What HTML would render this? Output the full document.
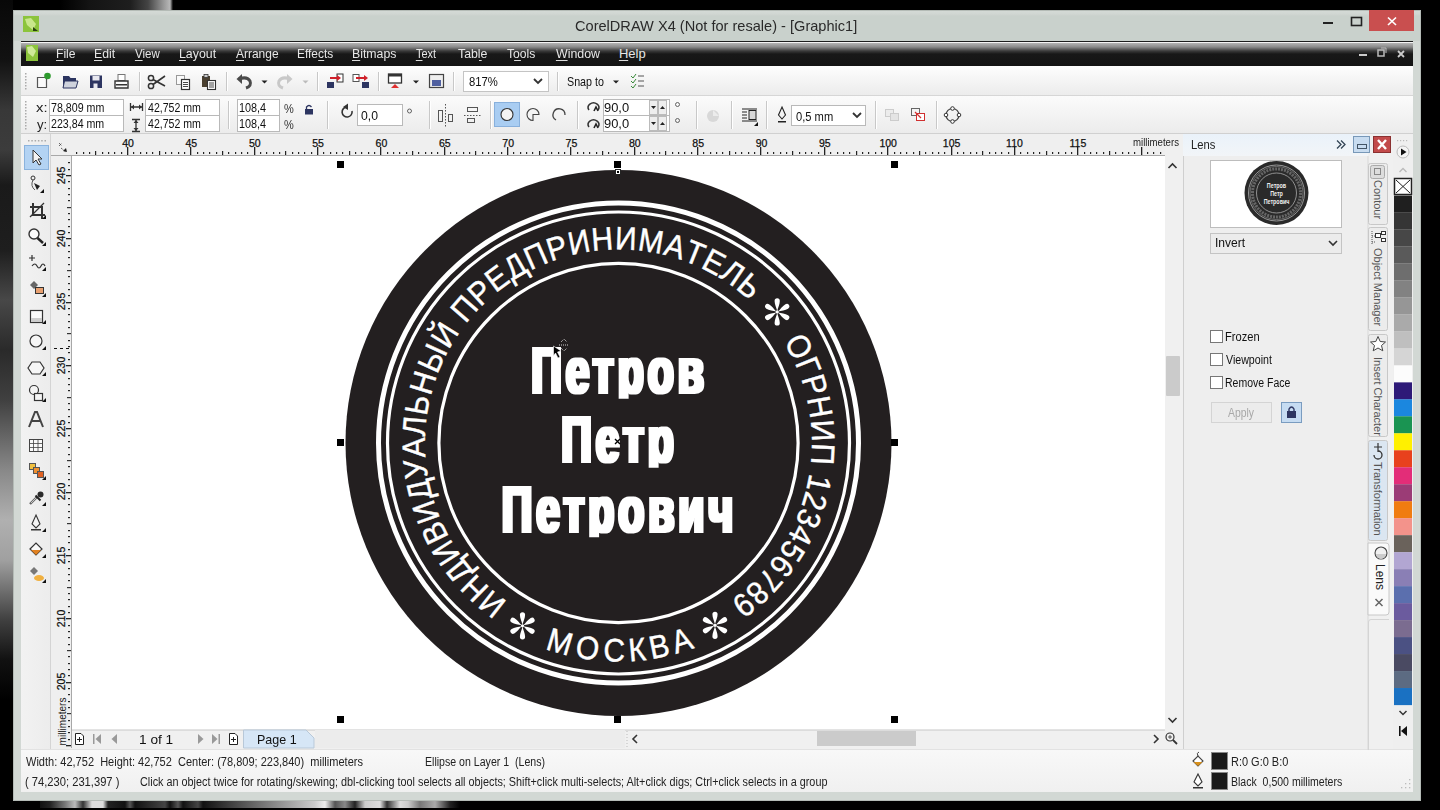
<!DOCTYPE html>
<html><head><meta charset="utf-8">
<style>
*{margin:0;padding:0;box-sizing:border-box}
html,body{width:1440px;height:810px;overflow:hidden;background:#000;font-family:"Liberation Sans",sans-serif;font-size:12px;color:#000}
.a{position:absolute}
.t{white-space:nowrap}
svg{position:absolute;left:0;top:0}
</style></head><body>
<div class="a" style="left:0px;top:0px;width:13px;height:810px;background:linear-gradient(180deg,#080808 0,#121212 60px,#383838 110px,#3c3c3c 150px,#1a1a1a 185px,#1e1e1e 250px,#484848 300px,#2a2a2a 350px,#404040 400px,#888 470px,#b0b0b0 520px,#a0a0a0 560px,#404040 620px,#111 660px,#000 700px)"></div>
<div class="a" style="left:40px;top:801px;width:420px;height:7px;background:linear-gradient(90deg,#111 0,#222 10px,#777 25px,#bbb 35px,#333 43px,#ddd 52px,#ddd 63px,#222 68px,#111 85px,#555 90px,#111 95px,#444 125px,#111 130px,#555 138px,#111 143px,#444 158px,#111 163px,#ccc 275px,#eee 285px,#555 295px,#888 305px,#222 315px,#ccc 325px,#ddd 340px,#333 347px,#ddd 360px,#ccc 368px,#777 380px,#aaa 395px,#222 410px,#000 420px)"></div>
<div class="a" style="left:60px;top:0px;width:113px;height:10px;background:linear-gradient(90deg,#000 0,#141414 30px,#1e1e1e 70px,#444 88px,#9a9a9a 104px,#b8b8b8 110px,#000 113px)"></div>
<div class="a" style="left:13px;top:10px;width:1408px;height:791px;background:#d2d8d4;border:1px solid #b4bbb6"></div>
<div class="a" style="left:14px;top:11px;width:1406px;height:30px;background:linear-gradient(180deg,#d4dad6 0,#d0d6d2 3px,#c9d1cc 5px,#c9d1cc 100%)"></div>
<div class="a" style="left:21px;top:41px;width:1392px;height:751px;background:#f0f0f0"></div>
<div class="a" style="left:21px;top:41px;width:1392px;height:25px;background:linear-gradient(180deg,#1e1e1e 0,#1e1e1e 1px,#f4f4f4 1px,#f4f4f4 2px,#b4b4b4 2px,#8a8a8a 6px,#3a3a3a 10px,#181818 13px,#141414 100%)"></div>
<div class="a" style="left:21px;top:66px;width:1392px;height:29px;background:linear-gradient(180deg,#fefefe 0,#f6f6f6 40%,#ececec 100%)"></div>
<div class="a" style="left:21px;top:95px;width:1392px;height:1px;background:#d6d6d6"></div>
<div class="a" style="left:21px;top:96px;width:1392px;height:38px;background:linear-gradient(180deg,#fbfbfb 0,#f3f3f3 50%,#ebebeb 100%)"></div>
<div class="a" style="left:21px;top:133px;width:1392px;height:1px;background:#d0d0d0"></div>
<div class="a" style="left:21px;top:134px;width:30px;height:616px;background:linear-gradient(90deg,#f2f2f2,#ececec)"></div>
<div class="a" style="left:50px;top:134px;width:1px;height:616px;background:#d4d4d4"></div>
<div class="a" style="left:51px;top:134px;width:1114px;height:22px;background:#efefef"></div>
<div class="a" style="left:51px;top:156px;width:21px;height:574px;background:#efefef"></div>
<div class="a" style="left:72px;top:156px;width:1093px;height:574px;background:#fff"></div>
<div class="a" style="left:1165px;top:156px;width:18px;height:574px;background:#f0f0f0"></div>
<div class="a" style="left:72px;top:730px;width:1111px;height:20px;background:#f0f0f0"></div>
<div class="a" style="left:51px;top:730px;width:21px;height:20px;background:#efefef"></div>
<div class="a" style="left:1183px;top:134px;width:185px;height:616px;background:#eeeeee"></div>
<div class="a" style="left:1183px;top:134px;width:1px;height:616px;background:#cfcfcf"></div>
<div class="a" style="left:1183px;top:134px;width:185px;height:22px;background:linear-gradient(180deg,#eaf2fa,#f2f5f8)"></div>
<div class="a" style="left:1368px;top:134px;width:25px;height:616px;background:#f0f0f0"></div>
<div class="a" style="left:1393px;top:134px;width:20px;height:616px;background:#efefef"></div>
<div class="a" style="left:21px;top:750px;width:1392px;height:42px;background:linear-gradient(180deg,#f8f8f8,#f0f0f0)"></div>
<div class="a" style="left:21px;top:749px;width:1392px;height:1px;background:#e2e2e2"></div>
<svg width="1440" height="810" viewBox="0 0 1440 810">
<rect x="23" y="16" width="16" height="16" fill="#8cc43c"/><path d="M25 19 L31 18 L36 24 L33 30 L27 25 Z" fill="#d8f0a0" opacity="0.8"/><path d="M33 27 L38 31 L33 31Z" fill="#2a4010"/>
<rect x="1323" y="22" width="10" height="2" fill="#222"/>
<rect x="1351.5" y="17.5" width="10" height="8" fill="none" stroke="#222" stroke-width="1.6"/>
<rect x="1369" y="10" width="45" height="21" fill="#c94f4f"/>
<path d="M1388 17.5 L1396 25 M1396 17.5 L1388 25" stroke="#fff" stroke-width="1.7"/>
<rect x="26" y="45" width="12" height="16" fill="#8cc43c"/><path d="M27 47 L32 46 L36 51 L33 57 L28 53Z" fill="#e0f4b0" opacity="0.8"/>
<rect x="56.0" y="60" width="7.4" height="1" fill="#ddd"/>
<rect x="94.0" y="60" width="8.2" height="1" fill="#ddd"/>
<rect x="134.9" y="60" width="7.7" height="1" fill="#ddd"/>
<rect x="179.0" y="60" width="6.9" height="1" fill="#ddd"/>
<rect x="236.0" y="60" width="8.0" height="1" fill="#ddd"/>
<rect x="318.2" y="60" width="6.0" height="1" fill="#ddd"/>
<rect x="352.0" y="60" width="8.2" height="1" fill="#ddd"/>
<rect x="415.8" y="60" width="6.7" height="1" fill="#ddd"/>
<rect x="479.0" y="60" width="2.7" height="1" fill="#ddd"/>
<rect x="514.1" y="60" width="6.8" height="1" fill="#ddd"/>
<rect x="555.9" y="60" width="11.7" height="1" fill="#ddd"/>
<rect x="618.9" y="60" width="9.3" height="1" fill="#ddd"/>
<rect x="1359" y="54" width="8" height="2" fill="#ccc"/>
<rect x="1378" y="50" width="6" height="6" fill="none" stroke="#bbb" stroke-width="1.5"/><path d="M1381 48 H1386 V53" fill="none" stroke="#bbb" stroke-width="1"/>
<path d="M1398 51 L1404 57 M1404 51 L1398 57" stroke="#ccc" stroke-width="1.8"/>
<rect x="25" y="73" width="1.5" height="1.5" fill="#aaa"/>
<rect x="25" y="76" width="1.5" height="1.5" fill="#aaa"/>
<rect x="25" y="79" width="1.5" height="1.5" fill="#aaa"/>
<rect x="25" y="82" width="1.5" height="1.5" fill="#aaa"/>
<rect x="25" y="85" width="1.5" height="1.5" fill="#aaa"/>
<rect x="25" y="88" width="1.5" height="1.5" fill="#aaa"/>
<path d="M37.5 77.5 H46.5 V87.5 H37.5 Z" fill="#fafafa" stroke="#555" stroke-width="1.2"/><circle cx="47.5" cy="76" r="3.3" fill="#2e9a2e"/>
<path d="M63 76 H69 L70.5 78 H76 V88 H63 Z" fill="#2c3560"/><path d="M64.5 81 H78 L76 88 H63 Z" fill="#cfd3dd" stroke="#2c3560" stroke-width="1"/>
<rect x="90" y="75.5" width="12" height="12.5" fill="#2d3561"/><rect x="92.5" y="76" width="7" height="4.5" fill="#e8e8f0"/><rect x="93.5" y="83.5" width="4" height="4.5" fill="#e8e8f0"/>
<rect x="118" y="74.5" width="7" height="6" fill="#fff" stroke="#777" stroke-width="1"/><path d="M115 81 H128 V88 H115 Z" fill="#fafafa" stroke="#333" stroke-width="1.4"/><rect x="116" y="84" width="11" height="1.5" fill="#333"/>
<rect x="139" y="72" width="1" height="19" fill="#c8c8c8"/><rect x="140" y="72" width="1" height="19" fill="#fff"/>
<circle cx="151" cy="78" r="2.6" fill="none" stroke="#333" stroke-width="1.5"/><circle cx="151" cy="86" r="2.6" fill="none" stroke="#333" stroke-width="1.5"/><path d="M153 79.5 L165 86 M153 84.5 L165 76" stroke="#333" stroke-width="1.6"/>
<rect x="176.5" y="75.5" width="8" height="9" fill="#fafafa" stroke="#999" stroke-width="1"/><rect x="181.5" y="79.5" width="8" height="10" fill="#fff" stroke="#333" stroke-width="1.2"/><path d="M183 82.5 H188 M183 84.5 H188 M183 86.5 H188" stroke="#333" stroke-width="0.9"/>
<rect x="202" y="76" width="8" height="11" fill="#4a4030"/><rect x="204" y="74.5" width="4" height="3" fill="#ccc" stroke="#333" stroke-width="0.8"/><rect x="207.5" y="80.5" width="8" height="9" fill="#fff" stroke="#333" stroke-width="1.1"/><path d="M209 83 H214 M209 85 H214 M209 87 H214" stroke="#333" stroke-width="0.9"/>
<rect x="226" y="72" width="1" height="19" fill="#c8c8c8"/><rect x="227" y="72" width="1" height="19" fill="#fff"/>
<path d="M239 79 Q247 76 250 81 Q252 86 246 88" fill="none" stroke="#4a4a4a" stroke-width="3"/><path d="M236.5 79 L242 74 L242 84 Z" fill="#4a4a4a"/>
<path d="M261.5 80.5 H267.5 L264.5 83.5 Z" fill="#222"/>
<path d="M290 79 Q282 76 279 81 Q277 86 283 88" fill="none" stroke="#c8c8c8" stroke-width="3"/><path d="M292.5 79 L287 74 L287 84 Z" fill="#c8c8c8"/>
<path d="M302.5 80.5 H308.5 L305.5 83.5 Z" fill="#bbb"/>
<rect x="317" y="72" width="1" height="19" fill="#c8c8c8"/><rect x="318" y="72" width="1" height="19" fill="#fff"/>
<rect x="337" y="74" width="6" height="8" fill="#fff" stroke="#333" stroke-width="1"/><path d="M330 78 H338" stroke="#d0202a" stroke-width="2"/><path d="M337 75 L341 78 L337 81Z" fill="#d0202a"/><rect x="327" y="82" width="7" height="6" fill="#2d3561"/>
<rect x="353" y="74.5" width="6" height="7" fill="#fff" stroke="#555" stroke-width="1"/><path d="M356 78 H366" stroke="#d0202a" stroke-width="2"/><path d="M364 75 L368 78 L364 81Z" fill="#d0202a"/><rect x="362" y="82" width="7" height="6" fill="#2d3561"/>
<rect x="378" y="72" width="1" height="19" fill="#c8c8c8"/><rect x="379" y="72" width="1" height="19" fill="#fff"/>
<rect x="388.5" y="74" width="13" height="9" fill="#fff" stroke="#333" stroke-width="1.3"/><rect x="389" y="74" width="12" height="2.5" fill="#333"/><path d="M391 88 L395 84 L399 88 Z" fill="#e03030"/>
<path d="M413 80.5 H419 L416 83.5 Z" fill="#222"/>
<rect x="429.5" y="74.5" width="14" height="13" fill="#eee" stroke="#444" stroke-width="1.2"/><rect x="432" y="80" width="9" height="6" fill="#5060a0"/>
<rect x="453" y="72" width="1" height="19" fill="#c8c8c8"/><rect x="454" y="72" width="1" height="19" fill="#fff"/>
<rect x="463.5" y="71.5" width="85" height="20" fill="#fff" stroke="#c4c4c4" stroke-width="1"/>
<path d="M534 79 L538 83 L542 79" fill="none" stroke="#333" stroke-width="1.8"/>
<rect x="557" y="72" width="1" height="19" fill="#c8c8c8"/><rect x="558" y="72" width="1" height="19" fill="#fff"/>
<path d="M613 80.5 H619 L616 83.5 Z" fill="#222"/>
<path d="M631 76 L633 78 L636 74 M631 81 L633 83 L636 79 M631 86 L633 88 L636 84" fill="none" stroke="#3a8a3a" stroke-width="1"/><path d="M638 76 H644 M638 81 H644 M638 86 H644" stroke="#555" stroke-width="1"/>
<rect x="25" y="101" width="1.5" height="1.5" fill="#aaa"/>
<rect x="25" y="104" width="1.5" height="1.5" fill="#aaa"/>
<rect x="25" y="107" width="1.5" height="1.5" fill="#aaa"/>
<rect x="25" y="110" width="1.5" height="1.5" fill="#aaa"/>
<rect x="25" y="113" width="1.5" height="1.5" fill="#aaa"/>
<rect x="25" y="116" width="1.5" height="1.5" fill="#aaa"/>
<rect x="25" y="119" width="1.5" height="1.5" fill="#aaa"/>
<rect x="25" y="122" width="1.5" height="1.5" fill="#aaa"/>
<rect x="25" y="125" width="1.5" height="1.5" fill="#aaa"/>
<rect x="25" y="128" width="1.5" height="1.5" fill="#aaa"/>
<rect x="49.5" y="99.5" width="74.0" height="16.0" fill="#fff" stroke="#b9b9b9" stroke-width="1"/>
<rect x="49.5" y="115.5" width="74.0" height="16.0" fill="#fff" stroke="#b9b9b9" stroke-width="1"/>
<path d="M130.5 103 V111 M142.5 103 V111 M131 107 H142" stroke="#333" stroke-width="1.3"/><path d="M131 107 L134 104.5 V109.5Z M142 107 L139 104.5 V109.5Z" fill="#333"/>
<path d="M132 119.5 H140 M132 131.5 H140 M136 120 V131" stroke="#333" stroke-width="1.3"/><path d="M136 120 L133.5 123 H138.5Z M136 131 L133.5 128 H138.5Z" fill="#333"/>
<rect x="145.5" y="99.5" width="74.0" height="16.0" fill="#fff" stroke="#b9b9b9" stroke-width="1"/>
<rect x="145.5" y="115.5" width="74.0" height="16.0" fill="#fff" stroke="#b9b9b9" stroke-width="1"/>
<rect x="228" y="101" width="1" height="28" fill="#c8c8c8"/><rect x="229" y="101" width="1" height="28" fill="#fff"/>
<rect x="237.5" y="99.5" width="42.0" height="16.0" fill="#fff" stroke="#b9b9b9" stroke-width="1"/>
<rect x="237.5" y="115.5" width="42.0" height="16.0" fill="#fff" stroke="#b9b9b9" stroke-width="1"/>
<rect x="305" y="109" width="8" height="5.5" fill="#2d3561"/><path d="M306.5 109 V107 Q309 104 311.5 107" fill="none" stroke="#2d3561" stroke-width="1.3"/>
<rect x="327" y="101" width="1" height="28" fill="#c8c8c8"/><rect x="328" y="101" width="1" height="28" fill="#fff"/>
<path d="M352 111 A5 5 0 1 1 347 107" fill="none" stroke="#333" stroke-width="1.6"/><path d="M343 107 L348 103.5 L348 110 Z" fill="#333"/>
<rect x="357.5" y="104.5" width="45.0" height="21.0" fill="#fff" stroke="#b9b9b9" stroke-width="1"/>
<circle cx="409.5" cy="111" r="2" fill="none" stroke="#555" stroke-width="0.9"/>
<rect x="429" y="101" width="1" height="28" fill="#c8c8c8"/><rect x="430" y="101" width="1" height="28" fill="#fff"/>
<path d="M445.5 104 V127" stroke="#555" stroke-width="1" stroke-dasharray="1.5 1.5"/><rect x="438.5" y="110.5" width="4" height="11" fill="none" stroke="#555" stroke-width="1"/><rect x="448.5" y="114.5" width="4" height="7" fill="none" stroke="#555" stroke-width="1"/>
<path d="M464 115.5 H481" stroke="#555" stroke-width="1" stroke-dasharray="1.5 1.5"/><rect x="467.5" y="107.5" width="10" height="4" fill="none" stroke="#555" stroke-width="1"/><rect x="467.5" y="118.5" width="7" height="4" fill="none" stroke="#555" stroke-width="1"/>
<rect x="490" y="101" width="1" height="28" fill="#c8c8c8"/><rect x="491" y="101" width="1" height="28" fill="#fff"/>
<rect x="494.5" y="102.5" width="25" height="24" fill="#a9cdf2" stroke="#88b0dc" stroke-width="1"/><circle cx="507" cy="114.5" r="6" fill="#f4f4f4" stroke="#333" stroke-width="1.1"/>
<path d="M539 114.5 A6 6 0 1 0 533 120.5 L533 114.5 Z" fill="#f4f4f4" stroke="#444" stroke-width="1.1"/>
<path d="M565 115 A6 6 0 1 0 556 120" fill="none" stroke="#444" stroke-width="1.3"/>
<rect x="577" y="101" width="1" height="28" fill="#c8c8c8"/><rect x="578" y="101" width="1" height="28" fill="#fff"/>
<path d="M589 110 A5.5 4.5 0 1 1 598 110" fill="none" stroke="#333" stroke-width="1.6"/><path d="M594 111 L596 107 L598 111" fill="none" stroke="#222" stroke-width="1.6"/>
<path d="M589 127 A5.5 4.5 0 1 1 598 127" fill="none" stroke="#333" stroke-width="1.6"/><path d="M594 128 L596 124 L598 128" fill="none" stroke="#222" stroke-width="1.6"/>
<rect x="603.5" y="99.5" width="66.0" height="16.0" fill="#fff" stroke="#b9b9b9" stroke-width="1"/>
<rect x="603.5" y="115.5" width="66.0" height="16.0" fill="#fff" stroke="#b9b9b9" stroke-width="1"/>
<rect x="649.5" y="100.5" width="8" height="14" fill="#eee" stroke="#bbb" stroke-width="1"/><rect x="658.5" y="100.5" width="8" height="14" fill="#eee" stroke="#bbb" stroke-width="1"/>
<path d="M651 106 H656 L653.5 109 Z" fill="#222"/><path d="M660 109 H665 L662.5 106 Z" fill="#222"/>
<rect x="649.5" y="116.5" width="8" height="14" fill="#eee" stroke="#bbb" stroke-width="1"/><rect x="658.5" y="116.5" width="8" height="14" fill="#eee" stroke="#bbb" stroke-width="1"/>
<path d="M651 122 H656 L653.5 125 Z" fill="#222"/><path d="M660 125 H665 L662.5 122 Z" fill="#222"/>
<circle cx="677.5" cy="104.5" r="2" fill="none" stroke="#555" stroke-width="0.9"/><circle cx="677.5" cy="120.5" r="2" fill="none" stroke="#555" stroke-width="0.9"/>
<rect x="696" y="101" width="1" height="28" fill="#c8c8c8"/><rect x="697" y="101" width="1" height="28" fill="#fff"/>
<circle cx="713" cy="116" r="6" fill="#d8d8d8"/><path d="M713 110 V116 H719" fill="#ececec"/>
<rect x="731" y="101" width="1" height="28" fill="#c8c8c8"/><rect x="732" y="101" width="1" height="28" fill="#fff"/>
<path d="M742 109 H757 M742 112 H747 M742 115 H747 M742 118 H747 M742 121 H757" stroke="#222" stroke-width="1"/><rect x="749" y="110.5" width="7" height="9" fill="#d8d8d8" stroke="#222" stroke-width="1"/><path d="M754 126 L758 122 V126Z" fill="#111"/>
<rect x="766" y="101" width="1" height="28" fill="#c8c8c8"/><rect x="767" y="101" width="1" height="28" fill="#fff"/>
<path d="M782 107 L785.5 115 L782 119 L778.5 115 Z" fill="none" stroke="#222" stroke-width="1.1"/><rect x="778" y="121" width="8" height="1.5" fill="#222"/>
<rect x="791.5" y="105.5" width="74.0" height="20.0" fill="#fff" stroke="#b9b9b9" stroke-width="1"/>
<path d="M853 113 L857 117 L861 113" fill="none" stroke="#333" stroke-width="1.8"/>
<rect x="875" y="101" width="1" height="28" fill="#c8c8c8"/><rect x="876" y="101" width="1" height="28" fill="#fff"/>
<rect x="885.5" y="109.5" width="8" height="7" fill="#ececec" stroke="#ccc"/><rect x="890.5" y="113.5" width="8" height="7" fill="#e4e4e4" stroke="#ccc"/>
<rect x="911.5" y="108.5" width="8" height="7" fill="#f4f4f4" stroke="#666"/><rect x="916.5" y="113.5" width="8" height="7" fill="#fff" stroke="#d03030"/><path d="M915 112 L921 118" stroke="#d03030" stroke-width="1.2"/>
<rect x="936" y="101" width="1" height="28" fill="#c8c8c8"/><rect x="937" y="101" width="1" height="28" fill="#fff"/>
<circle cx="952.5" cy="115" r="6.5" fill="none" stroke="#444" stroke-width="1.2"/>
<circle cx="952.5" cy="108.5" r="1.8" fill="#fff" stroke="#333" stroke-width="1"/>
<circle cx="959" cy="115" r="1.8" fill="#fff" stroke="#333" stroke-width="1"/>
<circle cx="952.5" cy="121.5" r="1.8" fill="#fff" stroke="#333" stroke-width="1"/>
<circle cx="946" cy="115" r="1.8" fill="#fff" stroke="#333" stroke-width="1"/>
<rect x="28" y="140" width="1.5" height="1.5" fill="#aaa"/>
<rect x="31.3" y="140" width="1.5" height="1.5" fill="#aaa"/>
<rect x="34.6" y="140" width="1.5" height="1.5" fill="#aaa"/>
<rect x="37.9" y="140" width="1.5" height="1.5" fill="#aaa"/>
<rect x="41.2" y="140" width="1.5" height="1.5" fill="#aaa"/>
<rect x="44.5" y="140" width="1.5" height="1.5" fill="#aaa"/>
<rect x="24.5" y="145.5" width="24" height="24" fill="#b3d3f3" stroke="#8bb3dd" stroke-width="1"/>
<path d="M33 150 L33 163 L36 160 L39 165 L41 164 L38 159 L42 159 Z" fill="#f4f4f4" stroke="#333" stroke-width="1"/>
<circle cx="33" cy="178" r="2" fill="none" stroke="#333"/><path d="M33 180 Q30 186 35 190" fill="none" stroke="#555"/><path d="M34 183 L40 186 L37 190 Z" fill="#222"/>
<path d="M40 193 L44 189 L44 193 Z" fill="#111"/>
<path d="M33 203 V215 H45 M30 207 H42 V219" fill="none" stroke="#333" stroke-width="2"/><path d="M30 217 L44 203" stroke="#333" stroke-width="1.2"/>
<path d="M42 219 L46 215 L46 219 Z" fill="#111"/>
<circle cx="34" cy="234" r="5" fill="#fafafa" stroke="#333" stroke-width="1.4"/><path d="M37.5 238 L43 243" stroke="#222" stroke-width="2.4"/>
<path d="M42 246 L46 242 L46 246 Z" fill="#111"/>
<path d="M29 258 H35 M32 255 V261 M32 266 Q35 262 37 266 Q39 270 41 266 Q43 262 45 266" fill="none" stroke="#333" stroke-width="1.2"/>
<path d="M42 271 L46 267 L46 271 Z" fill="#111"/>
<path d="M30 285 L34 281 L38 285 L34 289 Z" fill="#666"/><rect x="35.5" y="287.5" width="8" height="6" fill="#e8a070" stroke="#333" stroke-width="1"/>
<path d="M42 297 L46 293 L46 297 Z" fill="#111"/>
<rect x="30.5" y="310.5" width="12" height="12" fill="#fafafa" stroke="#333" stroke-width="1.2"/><rect x="31" y="318" width="11" height="4" fill="#ccc"/>
<path d="M42 324 L46 320 L46 324 Z" fill="#111"/>
<circle cx="36" cy="341" r="6" fill="#f6f6f6" stroke="#333" stroke-width="1.2"/>
<path d="M42 350 L46 346 L46 350 Z" fill="#111"/>
<path d="M32 362 H40 L44 368 L40 374 H32 L28 368 Z" fill="#f6f6f6" stroke="#333" stroke-width="1.2"/>
<path d="M42 376 L46 372 L46 376 Z" fill="#111"/>
<circle cx="34" cy="390" r="4.5" fill="#f4f4f4" stroke="#333" stroke-width="1.2"/><rect x="34.5" y="393.5" width="8" height="7" fill="#f4f4f4" stroke="#333" stroke-width="1.2"/>
<path d="M42 402 L46 398 L46 402 Z" fill="#111"/>
<path d="M29 427 L35 412 H37 L43 427 M31.5 421 H40.5" fill="none" stroke="#444" stroke-width="2"/>
<rect x="29.5" y="439.5" width="13" height="12" fill="#fafafa" stroke="#444" stroke-width="1"/><path d="M29.5 443.5 H42.5 M29.5 447.5 H42.5 M33.5 439.5 V451.5 M38 439.5 V451.5" stroke="#444" stroke-width="0.8"/>
<rect x="29.5" y="463.5" width="6" height="6" fill="#f0c040" stroke="#555"/><rect x="33.5" y="467.5" width="6" height="6" fill="#f09030" stroke="#555"/><rect x="37.5" y="471.5" width="6" height="6" fill="#e06020" stroke="#555"/>
<path d="M42 480 L46 476 L46 480 Z" fill="#111"/>
<path d="M30 504 L37 497" stroke="#666" stroke-width="2.4"/><path d="M31 503 L36 498" stroke="#ddd" stroke-width="0.8"/><path d="M35.5 495.5 L40.5 500.5" stroke="#222" stroke-width="2"/><circle cx="40.5" cy="494.5" r="3" fill="#2a2a2a"/>
<path d="M42 506 L46 502 L46 506 Z" fill="#111"/>
<path d="M36 515 L40 524 L36 528 L32 524 Z" fill="#f4f4f4" stroke="#333" stroke-width="1.1"/><rect x="31" y="529" width="10" height="1.5" fill="#333"/>
<path d="M42 532 L46 528 L46 532 Z" fill="#111"/>
<path d="M30 549 L36 543 L42 549 L36 555 Z" fill="#fafafa" stroke="#333" stroke-width="1.2"/><path d="M31 550 L41 550 L36 555 Z" fill="#e08020"/>
<path d="M42 558 L46 554 L46 558 Z" fill="#111"/>
<path d="M30 571 L34 567 L38 571 L34 575Z" fill="#777"/><ellipse cx="39" cy="578" rx="5" ry="3" fill="#f0b040"/>
<path d="M42 583 L46 579 L46 583 Z" fill="#111"/>
<rect x="51" y="155" width="1114" height="1" fill="#a8a8a8"/>
<rect x="71" y="156" width="1" height="574" fill="#a8a8a8"/>
<path d="M59 146 L62 143 M59 143 L62 146 M61 148 L66 152" stroke="#333" stroke-width="1" stroke-dasharray="1 1"/><path d="M63 151 L67 152 L66 148Z" fill="#222"/>
<rect x="76" y="152" width="1.2" height="2" fill="#222"/><rect x="83" y="152" width="1.2" height="2" fill="#222"/><rect x="89" y="152" width="1.2" height="2" fill="#222"/><rect x="95" y="151" width="1.2" height="4" fill="#222"/><rect x="102" y="152" width="1.2" height="2" fill="#222"/><rect x="108" y="152" width="1.2" height="2" fill="#222"/><rect x="114" y="152" width="1.2" height="2" fill="#222"/><rect x="121" y="152" width="1.2" height="2" fill="#222"/><rect x="127" y="147" width="1.3" height="8" fill="#222"/><rect x="133" y="152" width="1.2" height="2" fill="#222"/><rect x="140" y="152" width="1.2" height="2" fill="#222"/><rect x="146" y="152" width="1.2" height="2" fill="#222"/><rect x="152" y="152" width="1.2" height="2" fill="#222"/><rect x="159" y="151" width="1.2" height="4" fill="#222"/><rect x="165" y="152" width="1.2" height="2" fill="#222"/><rect x="171" y="152" width="1.2" height="2" fill="#222"/><rect x="178" y="152" width="1.2" height="2" fill="#222"/><rect x="184" y="152" width="1.2" height="2" fill="#222"/><rect x="190" y="147" width="1.3" height="8" fill="#222"/><rect x="197" y="152" width="1.2" height="2" fill="#222"/><rect x="203" y="152" width="1.2" height="2" fill="#222"/><rect x="209" y="152" width="1.2" height="2" fill="#222"/><rect x="216" y="152" width="1.2" height="2" fill="#222"/><rect x="222" y="151" width="1.2" height="4" fill="#222"/><rect x="228" y="152" width="1.2" height="2" fill="#222"/><rect x="235" y="152" width="1.2" height="2" fill="#222"/><rect x="241" y="152" width="1.2" height="2" fill="#222"/><rect x="247" y="152" width="1.2" height="2" fill="#222"/><rect x="254" y="147" width="1.3" height="8" fill="#222"/><rect x="260" y="152" width="1.2" height="2" fill="#222"/><rect x="266" y="152" width="1.2" height="2" fill="#222"/><rect x="273" y="152" width="1.2" height="2" fill="#222"/><rect x="279" y="152" width="1.2" height="2" fill="#222"/><rect x="285" y="151" width="1.2" height="4" fill="#222"/><rect x="292" y="152" width="1.2" height="2" fill="#222"/><rect x="298" y="152" width="1.2" height="2" fill="#222"/><rect x="304" y="152" width="1.2" height="2" fill="#222"/><rect x="311" y="152" width="1.2" height="2" fill="#222"/><rect x="317" y="147" width="1.3" height="8" fill="#222"/><rect x="323" y="152" width="1.2" height="2" fill="#222"/><rect x="330" y="152" width="1.2" height="2" fill="#222"/><rect x="336" y="152" width="1.2" height="2" fill="#222"/><rect x="342" y="152" width="1.2" height="2" fill="#222"/><rect x="349" y="151" width="1.2" height="4" fill="#222"/><rect x="355" y="152" width="1.2" height="2" fill="#222"/><rect x="361" y="152" width="1.2" height="2" fill="#222"/><rect x="368" y="152" width="1.2" height="2" fill="#222"/><rect x="374" y="152" width="1.2" height="2" fill="#222"/><rect x="380" y="147" width="1.3" height="8" fill="#222"/><rect x="387" y="152" width="1.2" height="2" fill="#222"/><rect x="393" y="152" width="1.2" height="2" fill="#222"/><rect x="399" y="152" width="1.2" height="2" fill="#222"/><rect x="406" y="152" width="1.2" height="2" fill="#222"/><rect x="412" y="151" width="1.2" height="4" fill="#222"/><rect x="418" y="152" width="1.2" height="2" fill="#222"/><rect x="425" y="152" width="1.2" height="2" fill="#222"/><rect x="431" y="152" width="1.2" height="2" fill="#222"/><rect x="437" y="152" width="1.2" height="2" fill="#222"/><rect x="444" y="147" width="1.3" height="8" fill="#222"/><rect x="450" y="152" width="1.2" height="2" fill="#222"/><rect x="456" y="152" width="1.2" height="2" fill="#222"/><rect x="463" y="152" width="1.2" height="2" fill="#222"/><rect x="469" y="152" width="1.2" height="2" fill="#222"/><rect x="475" y="151" width="1.2" height="4" fill="#222"/><rect x="482" y="152" width="1.2" height="2" fill="#222"/><rect x="488" y="152" width="1.2" height="2" fill="#222"/><rect x="494" y="152" width="1.2" height="2" fill="#222"/><rect x="501" y="152" width="1.2" height="2" fill="#222"/><rect x="507" y="147" width="1.3" height="8" fill="#222"/><rect x="513" y="152" width="1.2" height="2" fill="#222"/><rect x="520" y="152" width="1.2" height="2" fill="#222"/><rect x="526" y="152" width="1.2" height="2" fill="#222"/><rect x="532" y="152" width="1.2" height="2" fill="#222"/><rect x="539" y="151" width="1.2" height="4" fill="#222"/><rect x="545" y="152" width="1.2" height="2" fill="#222"/><rect x="551" y="152" width="1.2" height="2" fill="#222"/><rect x="558" y="152" width="1.2" height="2" fill="#222"/><rect x="564" y="152" width="1.2" height="2" fill="#222"/><rect x="570" y="147" width="1.3" height="8" fill="#222"/><rect x="577" y="152" width="1.2" height="2" fill="#222"/><rect x="583" y="152" width="1.2" height="2" fill="#222"/><rect x="589" y="152" width="1.2" height="2" fill="#222"/><rect x="596" y="152" width="1.2" height="2" fill="#222"/><rect x="602" y="151" width="1.2" height="4" fill="#222"/><rect x="608" y="152" width="1.2" height="2" fill="#222"/><rect x="615" y="152" width="1.2" height="2" fill="#222"/><rect x="621" y="152" width="1.2" height="2" fill="#222"/><rect x="627" y="152" width="1.2" height="2" fill="#222"/><rect x="634" y="147" width="1.3" height="8" fill="#222"/><rect x="640" y="152" width="1.2" height="2" fill="#222"/><rect x="646" y="152" width="1.2" height="2" fill="#222"/><rect x="653" y="152" width="1.2" height="2" fill="#222"/><rect x="659" y="152" width="1.2" height="2" fill="#222"/><rect x="665" y="151" width="1.2" height="4" fill="#222"/><rect x="672" y="152" width="1.2" height="2" fill="#222"/><rect x="678" y="152" width="1.2" height="2" fill="#222"/><rect x="684" y="152" width="1.2" height="2" fill="#222"/><rect x="691" y="152" width="1.2" height="2" fill="#222"/><rect x="697" y="147" width="1.3" height="8" fill="#222"/><rect x="703" y="152" width="1.2" height="2" fill="#222"/><rect x="710" y="152" width="1.2" height="2" fill="#222"/><rect x="716" y="152" width="1.2" height="2" fill="#222"/><rect x="722" y="152" width="1.2" height="2" fill="#222"/><rect x="729" y="151" width="1.2" height="4" fill="#222"/><rect x="735" y="152" width="1.2" height="2" fill="#222"/><rect x="741" y="152" width="1.2" height="2" fill="#222"/><rect x="748" y="152" width="1.2" height="2" fill="#222"/><rect x="754" y="152" width="1.2" height="2" fill="#222"/><rect x="760" y="147" width="1.3" height="8" fill="#222"/><rect x="767" y="152" width="1.2" height="2" fill="#222"/><rect x="773" y="152" width="1.2" height="2" fill="#222"/><rect x="780" y="152" width="1.2" height="2" fill="#222"/><rect x="786" y="152" width="1.2" height="2" fill="#222"/><rect x="792" y="151" width="1.2" height="4" fill="#222"/><rect x="799" y="152" width="1.2" height="2" fill="#222"/><rect x="805" y="152" width="1.2" height="2" fill="#222"/><rect x="811" y="152" width="1.2" height="2" fill="#222"/><rect x="818" y="152" width="1.2" height="2" fill="#222"/><rect x="824" y="147" width="1.3" height="8" fill="#222"/><rect x="830" y="152" width="1.2" height="2" fill="#222"/><rect x="837" y="152" width="1.2" height="2" fill="#222"/><rect x="843" y="152" width="1.2" height="2" fill="#222"/><rect x="849" y="152" width="1.2" height="2" fill="#222"/><rect x="856" y="151" width="1.2" height="4" fill="#222"/><rect x="862" y="152" width="1.2" height="2" fill="#222"/><rect x="868" y="152" width="1.2" height="2" fill="#222"/><rect x="875" y="152" width="1.2" height="2" fill="#222"/><rect x="881" y="152" width="1.2" height="2" fill="#222"/><rect x="887" y="147" width="1.3" height="8" fill="#222"/><rect x="894" y="152" width="1.2" height="2" fill="#222"/><rect x="900" y="152" width="1.2" height="2" fill="#222"/><rect x="906" y="152" width="1.2" height="2" fill="#222"/><rect x="913" y="152" width="1.2" height="2" fill="#222"/><rect x="919" y="151" width="1.2" height="4" fill="#222"/><rect x="925" y="152" width="1.2" height="2" fill="#222"/><rect x="932" y="152" width="1.2" height="2" fill="#222"/><rect x="938" y="152" width="1.2" height="2" fill="#222"/><rect x="944" y="152" width="1.2" height="2" fill="#222"/><rect x="951" y="147" width="1.3" height="8" fill="#222"/><rect x="957" y="152" width="1.2" height="2" fill="#222"/><rect x="963" y="152" width="1.2" height="2" fill="#222"/><rect x="970" y="152" width="1.2" height="2" fill="#222"/><rect x="976" y="152" width="1.2" height="2" fill="#222"/><rect x="982" y="151" width="1.2" height="4" fill="#222"/><rect x="989" y="152" width="1.2" height="2" fill="#222"/><rect x="995" y="152" width="1.2" height="2" fill="#222"/><rect x="1001" y="152" width="1.2" height="2" fill="#222"/><rect x="1008" y="152" width="1.2" height="2" fill="#222"/><rect x="1014" y="147" width="1.3" height="8" fill="#222"/><rect x="1020" y="152" width="1.2" height="2" fill="#222"/><rect x="1027" y="152" width="1.2" height="2" fill="#222"/><rect x="1033" y="152" width="1.2" height="2" fill="#222"/><rect x="1039" y="152" width="1.2" height="2" fill="#222"/><rect x="1046" y="151" width="1.2" height="4" fill="#222"/><rect x="1052" y="152" width="1.2" height="2" fill="#222"/><rect x="1058" y="152" width="1.2" height="2" fill="#222"/><rect x="1065" y="152" width="1.2" height="2" fill="#222"/><rect x="1071" y="152" width="1.2" height="2" fill="#222"/><rect x="1077" y="147" width="1.3" height="8" fill="#222"/><rect x="1084" y="152" width="1.2" height="2" fill="#222"/><rect x="1090" y="152" width="1.2" height="2" fill="#222"/><rect x="1096" y="152" width="1.2" height="2" fill="#222"/><rect x="1103" y="152" width="1.2" height="2" fill="#222"/><rect x="1109" y="151" width="1.2" height="4" fill="#222"/><rect x="1115" y="152" width="1.2" height="2" fill="#222"/><rect x="1122" y="152" width="1.2" height="2" fill="#222"/><rect x="1128" y="152" width="1.2" height="2" fill="#222"/><rect x="1134" y="152" width="1.2" height="2" fill="#222"/><rect x="1141" y="147" width="1.3" height="8" fill="#222"/><rect x="1147" y="152" width="1.2" height="2" fill="#222"/><rect x="1153" y="152" width="1.2" height="2" fill="#222"/><rect x="1160" y="152" width="1.2" height="2" fill="#222"/>
<rect x="68" y="162" width="2" height="1.2" fill="#222"/><rect x="68" y="169" width="2" height="1.2" fill="#222"/><rect x="66" y="175" width="5" height="1.3" fill="#222"/><rect x="68" y="181" width="2" height="1.2" fill="#222"/><rect x="68" y="188" width="2" height="1.2" fill="#222"/><rect x="68" y="194" width="2" height="1.2" fill="#222"/><rect x="68" y="200" width="2" height="1.2" fill="#222"/><rect x="67" y="207" width="4" height="1.2" fill="#333"/><rect x="68" y="213" width="2" height="1.2" fill="#222"/><rect x="68" y="219" width="2" height="1.2" fill="#222"/><rect x="68" y="226" width="2" height="1.2" fill="#222"/><rect x="68" y="232" width="2" height="1.2" fill="#222"/><rect x="66" y="238" width="5" height="1.3" fill="#222"/><rect x="68" y="245" width="2" height="1.2" fill="#222"/><rect x="68" y="251" width="2" height="1.2" fill="#222"/><rect x="68" y="257" width="2" height="1.2" fill="#222"/><rect x="68" y="264" width="2" height="1.2" fill="#222"/><rect x="67" y="270" width="4" height="1.2" fill="#333"/><rect x="68" y="276" width="2" height="1.2" fill="#222"/><rect x="68" y="283" width="2" height="1.2" fill="#222"/><rect x="68" y="289" width="2" height="1.2" fill="#222"/><rect x="68" y="295" width="2" height="1.2" fill="#222"/><rect x="66" y="302" width="5" height="1.3" fill="#222"/><rect x="68" y="308" width="2" height="1.2" fill="#222"/><rect x="68" y="314" width="2" height="1.2" fill="#222"/><rect x="68" y="321" width="2" height="1.2" fill="#222"/><rect x="68" y="327" width="2" height="1.2" fill="#222"/><rect x="67" y="333" width="4" height="1.2" fill="#333"/><rect x="68" y="340" width="2" height="1.2" fill="#222"/><rect x="68" y="346" width="2" height="1.2" fill="#222"/><rect x="68" y="352" width="2" height="1.2" fill="#222"/><rect x="68" y="359" width="2" height="1.2" fill="#222"/><rect x="66" y="365" width="5" height="1.3" fill="#222"/><rect x="68" y="371" width="2" height="1.2" fill="#222"/><rect x="68" y="378" width="2" height="1.2" fill="#222"/><rect x="68" y="384" width="2" height="1.2" fill="#222"/><rect x="68" y="390" width="2" height="1.2" fill="#222"/><rect x="67" y="397" width="4" height="1.2" fill="#333"/><rect x="68" y="403" width="2" height="1.2" fill="#222"/><rect x="68" y="409" width="2" height="1.2" fill="#222"/><rect x="68" y="416" width="2" height="1.2" fill="#222"/><rect x="68" y="422" width="2" height="1.2" fill="#222"/><rect x="66" y="428" width="5" height="1.3" fill="#222"/><rect x="68" y="435" width="2" height="1.2" fill="#222"/><rect x="68" y="441" width="2" height="1.2" fill="#222"/><rect x="68" y="447" width="2" height="1.2" fill="#222"/><rect x="68" y="454" width="2" height="1.2" fill="#222"/><rect x="67" y="460" width="4" height="1.2" fill="#333"/><rect x="68" y="466" width="2" height="1.2" fill="#222"/><rect x="68" y="473" width="2" height="1.2" fill="#222"/><rect x="68" y="479" width="2" height="1.2" fill="#222"/><rect x="68" y="485" width="2" height="1.2" fill="#222"/><rect x="66" y="492" width="5" height="1.3" fill="#222"/><rect x="68" y="498" width="2" height="1.2" fill="#222"/><rect x="68" y="504" width="2" height="1.2" fill="#222"/><rect x="68" y="511" width="2" height="1.2" fill="#222"/><rect x="68" y="517" width="2" height="1.2" fill="#222"/><rect x="67" y="523" width="4" height="1.2" fill="#333"/><rect x="68" y="530" width="2" height="1.2" fill="#222"/><rect x="68" y="536" width="2" height="1.2" fill="#222"/><rect x="68" y="542" width="2" height="1.2" fill="#222"/><rect x="68" y="549" width="2" height="1.2" fill="#222"/><rect x="66" y="555" width="5" height="1.3" fill="#222"/><rect x="68" y="561" width="2" height="1.2" fill="#222"/><rect x="68" y="568" width="2" height="1.2" fill="#222"/><rect x="68" y="574" width="2" height="1.2" fill="#222"/><rect x="68" y="580" width="2" height="1.2" fill="#222"/><rect x="67" y="587" width="4" height="1.2" fill="#333"/><rect x="68" y="593" width="2" height="1.2" fill="#222"/><rect x="68" y="599" width="2" height="1.2" fill="#222"/><rect x="68" y="606" width="2" height="1.2" fill="#222"/><rect x="68" y="612" width="2" height="1.2" fill="#222"/><rect x="66" y="618" width="5" height="1.3" fill="#222"/><rect x="68" y="625" width="2" height="1.2" fill="#222"/><rect x="68" y="631" width="2" height="1.2" fill="#222"/><rect x="68" y="637" width="2" height="1.2" fill="#222"/><rect x="68" y="644" width="2" height="1.2" fill="#222"/><rect x="67" y="650" width="4" height="1.2" fill="#333"/><rect x="68" y="656" width="2" height="1.2" fill="#222"/><rect x="68" y="663" width="2" height="1.2" fill="#222"/><rect x="68" y="669" width="2" height="1.2" fill="#222"/><rect x="68" y="675" width="2" height="1.2" fill="#222"/><rect x="66" y="682" width="5" height="1.3" fill="#222"/><rect x="68" y="688" width="2" height="1.2" fill="#222"/><rect x="68" y="694" width="2" height="1.2" fill="#222"/><rect x="68" y="701" width="2" height="1.2" fill="#222"/><rect x="68" y="707" width="2" height="1.2" fill="#222"/><rect x="67" y="713" width="4" height="1.2" fill="#333"/><rect x="68" y="720" width="2" height="1.2" fill="#222"/><rect x="68" y="726" width="2" height="1.2" fill="#222"/><rect x="68" y="732" width="2" height="1.2" fill="#222"/><rect x="68" y="739" width="2" height="1.2" fill="#222"/><rect x="66" y="745" width="5" height="1.3" fill="#222"/>
<circle cx="618.5" cy="443.0" r="273" fill="#231f20"/>
<circle cx="618.5" cy="443.0" r="240" fill="none" stroke="#fff" stroke-width="5"/>
<circle cx="618.5" cy="443.0" r="231" fill="none" stroke="#fff" stroke-width="3.2"/>
<circle cx="618.5" cy="443.0" r="179.6" fill="none" stroke="#fff" stroke-width="3.2"/>
<g font-family="Liberation Sans" font-size="32.5" fill="#fff" stroke="#fff" stroke-width="0.45" text-anchor="middle"><text transform="translate(499.10 595.27) rotate(-141.90) scale(0.920 1)">И</text><text transform="translate(482.35 580.50) rotate(-135.28) scale(0.920 1)">Н</text><text transform="translate(467.82 564.40) rotate(-128.86) scale(0.920 1)">Д</text><text transform="translate(455.21 546.82) rotate(-122.45) scale(0.920 1)">И</text><text transform="translate(444.71 528.08) rotate(-116.09) scale(0.920 1)">В</text><text transform="translate(436.35 508.30) rotate(-109.72) scale(0.920 1)">И</text><text transform="translate(430.20 487.56) rotate(-103.31) scale(0.920 1)">Д</text><text transform="translate(426.56 467.54) rotate(-97.29) scale(0.920 1)">У</text><text transform="translate(425.05 447.41) rotate(-91.31) scale(0.920 1)">А</text><text transform="translate(425.67 426.91) rotate(-85.23) scale(0.920 1)">Л</text><text transform="translate(428.42 406.76) rotate(-79.20) scale(0.920 1)">Ь</text><text transform="translate(433.58 386.02) rotate(-72.88) scale(0.920 1)">Н</text><text transform="translate(442.43 362.74) rotate(-65.49) scale(0.920 1)">Ы</text><text transform="translate(454.17 340.83) rotate(-58.13) scale(0.920 1)">Й</text><text transform="translate(472.51 316.00) rotate(-48.98) scale(0.920 1)">П</text><text transform="translate(487.49 300.60) rotate(-42.61) scale(0.920 1)">Р</text><text transform="translate(503.43 287.43) rotate(-36.49) scale(0.920 1)">Е</text><text transform="translate(520.82 275.96) rotate(-30.32) scale(0.920 1)">Д</text><text transform="translate(540.08 266.10) rotate(-23.91) scale(0.920 1)">П</text><text transform="translate(560.17 258.50) rotate(-17.54) scale(0.920 1)">Р</text><text transform="translate(580.98 253.17) rotate(-11.18) scale(0.920 1)">И</text><text transform="translate(603.10 250.11) rotate(-4.57) scale(0.920 1)">Н</text><text transform="translate(625.42 249.62) rotate(2.05) scale(0.920 1)">И</text><text transform="translate(649.36 251.98) rotate(9.18) scale(0.920 1)">М</text><text transform="translate(672.04 257.05) rotate(16.06) scale(0.920 1)">А</text><text transform="translate(690.77 263.50) rotate(21.93) scale(0.920 1)">Т</text><text transform="translate(708.74 271.83) rotate(27.80) scale(0.920 1)">Е</text><text transform="translate(726.35 282.34) rotate(33.87) scale(0.920 1)">Л</text><text transform="translate(742.62 294.55) rotate(39.90) scale(0.920 1)">Ь</text><text transform="translate(789.19 351.86) rotate(61.90) scale(0.920 1)">О</text><text transform="translate(797.85 370.37) rotate(67.95) scale(0.920 1)">Г</text><text transform="translate(804.03 388.03) rotate(73.50) scale(0.920 1)">Р</text><text transform="translate(808.98 408.97) rotate(79.87) scale(0.920 1)">Н</text><text transform="translate(811.64 431.12) rotate(86.48) scale(0.920 1)">И</text><text transform="translate(811.72 453.39) rotate(93.08) scale(0.920 1)">П</text><text transform="translate(808.13 481.49) rotate(101.47) scale(0.920 1)">1</text><text transform="translate(803.96 498.21) rotate(106.58) scale(0.920 1)">2</text><text transform="translate(798.31 514.49) rotate(111.68) scale(0.920 1)">3</text><text transform="translate(791.24 530.20) rotate(116.78) scale(0.920 1)">4</text><text transform="translate(782.80 545.22) rotate(121.89) scale(0.920 1)">5</text><text transform="translate(773.06 559.43) rotate(126.99) scale(0.920 1)">6</text><text transform="translate(762.09 572.71) rotate(132.09) scale(0.920 1)">7</text><text transform="translate(749.98 584.97) rotate(137.20) scale(0.920 1)">8</text><text transform="translate(736.83 596.10) rotate(142.30) scale(0.920 1)">9</text><text transform="translate(556.81 652.61) rotate(16.40) scale(0.920 1)">М</text><text transform="translate(586.10 659.08) rotate(8.53) scale(0.920 1)">О</text><text transform="translate(613.93 661.45) rotate(1.20) scale(0.920 1)">С</text><text transform="translate(638.21 660.61) rotate(-5.18) scale(0.920 1)">К</text><text transform="translate(661.25 657.28) rotate(-11.28) scale(0.920 1)">В</text><text transform="translate(685.29 651.04) rotate(-17.80) scale(0.920 1)">А</text></g>
<g transform="translate(777.20 311.90)" fill="#fff"><circle r="1.6"/><path d="M0 -1 C-0.8 -4 -2.60 -8.00 -2.60 -11.00 A2.60 2.60 0 0 1 2.60 -11.00 C2.60 -8.00 0.8 -4 0 -1Z" transform="rotate(0)"/><path d="M0 -1 C-0.8 -4 -2.60 -8.00 -2.60 -11.00 A2.60 2.60 0 0 1 2.60 -11.00 C2.60 -8.00 0.8 -4 0 -1Z" transform="rotate(60)"/><path d="M0 -1 C-0.8 -4 -2.60 -8.00 -2.60 -11.00 A2.60 2.60 0 0 1 2.60 -11.00 C2.60 -8.00 0.8 -4 0 -1Z" transform="rotate(120)"/><path d="M0 -1 C-0.8 -4 -2.60 -8.00 -2.60 -11.00 A2.60 2.60 0 0 1 2.60 -11.00 C2.60 -8.00 0.8 -4 0 -1Z" transform="rotate(180)"/><path d="M0 -1 C-0.8 -4 -2.60 -8.00 -2.60 -11.00 A2.60 2.60 0 0 1 2.60 -11.00 C2.60 -8.00 0.8 -4 0 -1Z" transform="rotate(240)"/><path d="M0 -1 C-0.8 -4 -2.60 -8.00 -2.60 -11.00 A2.60 2.60 0 0 1 2.60 -11.00 C2.60 -8.00 0.8 -4 0 -1Z" transform="rotate(300)"/></g><g transform="translate(715.00 625.30)" fill="#fff"><circle r="1.6"/><path d="M0 -1 C-0.8 -4 -2.60 -8.00 -2.60 -11.00 A2.60 2.60 0 0 1 2.60 -11.00 C2.60 -8.00 0.8 -4 0 -1Z" transform="rotate(0)"/><path d="M0 -1 C-0.8 -4 -2.60 -8.00 -2.60 -11.00 A2.60 2.60 0 0 1 2.60 -11.00 C2.60 -8.00 0.8 -4 0 -1Z" transform="rotate(60)"/><path d="M0 -1 C-0.8 -4 -2.60 -8.00 -2.60 -11.00 A2.60 2.60 0 0 1 2.60 -11.00 C2.60 -8.00 0.8 -4 0 -1Z" transform="rotate(120)"/><path d="M0 -1 C-0.8 -4 -2.60 -8.00 -2.60 -11.00 A2.60 2.60 0 0 1 2.60 -11.00 C2.60 -8.00 0.8 -4 0 -1Z" transform="rotate(180)"/><path d="M0 -1 C-0.8 -4 -2.60 -8.00 -2.60 -11.00 A2.60 2.60 0 0 1 2.60 -11.00 C2.60 -8.00 0.8 -4 0 -1Z" transform="rotate(240)"/><path d="M0 -1 C-0.8 -4 -2.60 -8.00 -2.60 -11.00 A2.60 2.60 0 0 1 2.60 -11.00 C2.60 -8.00 0.8 -4 0 -1Z" transform="rotate(300)"/></g><g transform="translate(522.50 625.80)" fill="#fff"><circle r="1.6"/><path d="M0 -1 C-0.8 -4 -2.60 -8.00 -2.60 -11.00 A2.60 2.60 0 0 1 2.60 -11.00 C2.60 -8.00 0.8 -4 0 -1Z" transform="rotate(0)"/><path d="M0 -1 C-0.8 -4 -2.60 -8.00 -2.60 -11.00 A2.60 2.60 0 0 1 2.60 -11.00 C2.60 -8.00 0.8 -4 0 -1Z" transform="rotate(60)"/><path d="M0 -1 C-0.8 -4 -2.60 -8.00 -2.60 -11.00 A2.60 2.60 0 0 1 2.60 -11.00 C2.60 -8.00 0.8 -4 0 -1Z" transform="rotate(120)"/><path d="M0 -1 C-0.8 -4 -2.60 -8.00 -2.60 -11.00 A2.60 2.60 0 0 1 2.60 -11.00 C2.60 -8.00 0.8 -4 0 -1Z" transform="rotate(180)"/><path d="M0 -1 C-0.8 -4 -2.60 -8.00 -2.60 -11.00 A2.60 2.60 0 0 1 2.60 -11.00 C2.60 -8.00 0.8 -4 0 -1Z" transform="rotate(240)"/><path d="M0 -1 C-0.8 -4 -2.60 -8.00 -2.60 -11.00 A2.60 2.60 0 0 1 2.60 -11.00 C2.60 -8.00 0.8 -4 0 -1Z" transform="rotate(300)"/></g>
<defs>
<clipPath id="cl0"><rect x="400" y="334.0" width="440" height="64.8"/></clipPath>
<clipPath id="cl1"><rect x="400" y="403.0" width="440" height="64.8"/></clipPath>
<clipPath id="cl2"><rect x="400" y="472.4" width="440" height="64.8"/></clipPath>
<filter id="fat" x="-10%" y="-10%" width="120%" height="120%"><feMorphology operator="dilate" radius="1.7 0.8"/></filter>
</defs>
<g clip-path="url(#cl0)"><g filter="url(#fat)" font-family="Liberation Sans" font-weight="bold" font-size="64" fill="#fff" letter-spacing="6" text-anchor="middle"><text transform="translate(619.5 393.2) scale(0.665 1)">Петров</text></g></g>
<g clip-path="url(#cl1)"><g filter="url(#fat)" font-family="Liberation Sans" font-weight="bold" font-size="64" fill="#fff" letter-spacing="6" text-anchor="middle"><text transform="translate(619.5 462.2) scale(0.665 1)">Петр</text></g></g>
<g clip-path="url(#cl2)"><g filter="url(#fat)" font-family="Liberation Sans" font-weight="bold" font-size="64" fill="#fff" letter-spacing="6" text-anchor="middle"><text transform="translate(619.5 531.6) scale(0.665 1)">Петрович</text></g></g>
<rect x="337" y="161" width="7" height="7" fill="#000"/>
<rect x="337" y="439" width="7" height="7" fill="#000"/>
<rect x="337" y="716" width="7" height="7" fill="#000"/>
<rect x="614" y="161" width="7" height="7" fill="#000"/>
<rect x="614" y="716" width="7" height="7" fill="#000"/>
<rect x="891" y="161" width="7" height="7" fill="#000"/>
<rect x="891" y="439" width="7" height="7" fill="#000"/>
<rect x="891" y="716" width="7" height="7" fill="#000"/>
<path d="M615 439 L620 444 M620 439 L615 444" stroke="#000" stroke-width="1.4"/>
<rect x="615.5" y="169.5" width="5" height="5" fill="#fff" stroke="#222" stroke-width="1"/><rect x="617" y="171" width="2" height="2" fill="#000"/>
<path d="M553.5 346 L561 351 L557.5 352 L560 357 L558 358 L555.5 353 L553.5 356 Z" fill="#000" stroke="#fff" stroke-width="0.6"/>
<path d="M561 342 L564 339 L567 342 M561 348 L564 351 L567 348 M559 345 H569" fill="none" stroke="#fff" stroke-width="0.8" stroke-dasharray="1 1"/>
<path d="M54 348.5 H70" stroke="#111" stroke-width="1.2" stroke-dasharray="3 3"/>
<path d="M1168.5 168 L1172.5 164 L1176.5 168" fill="none" stroke="#333" stroke-width="1.6"/>
<rect x="1166" y="356" width="14" height="40" rx="1" fill="#cbcbcb"/>
<path d="M1168.5 718 L1172.5 722 L1176.5 718" fill="none" stroke="#333" stroke-width="1.6"/>
<rect x="71" y="730" width="1" height="18" fill="#a8a8a8"/>
<rect x="72" y="729.5" width="1093" height="1" fill="#c8c8c8"/>
<path d="M75.5 733.5 H81 L83.5 736 V744.5 H75.5 Z" fill="#fff" stroke="#222" stroke-width="1"/><path d="M79.5 737 V742 M77 739.5 H82" stroke="#222" stroke-width="1"/>
<rect x="93" y="734" width="1.5" height="10" fill="#999"/><path d="M101 734 V744 L95.5 739Z" fill="#999"/>
<path d="M117 734 V744 L111.5 739Z" fill="#999"/>
<path d="M198 734 V744 L203.5 739Z" fill="#999"/>
<path d="M212 734 V744 L217.5 739Z" fill="#999"/><rect x="218.5" y="734" width="1.5" height="10" fill="#999"/>
<path d="M229.5 733.5 H235 L237.5 736 V744.5 H229.5 Z" fill="#fff" stroke="#222" stroke-width="1"/><path d="M233.5 737 V742 M231 739.5 H236" stroke="#222" stroke-width="1"/>
<path d="M243.5 730 V748 H314 V738 L306 730 Z" fill="#d6e6f6" stroke="#b8c8d8" stroke-width="1"/>
<rect x="315" y="730" width="310" height="18" fill="#ececec"/>
<path d="M627 731 V748" stroke="#bbb" stroke-dasharray="1 2"/>
<path d="M637 735 L633 739 L637 743" fill="none" stroke="#333" stroke-width="1.6"/>
<rect x="817" y="731" width="99" height="15" fill="#cbcbcb"/>
<path d="M1154 735 L1158 739 L1154 743" fill="none" stroke="#333" stroke-width="1.6"/>
<circle cx="1170" cy="737" r="4" fill="none" stroke="#333" stroke-width="1.2"/><path d="M1173 740 L1177 744" stroke="#333" stroke-width="1.8"/><path d="M1168 737 H1172 M1170 735 V739" stroke="#333" stroke-width="0.8"/>
<path d="M1337 140.5 L1341 144.5 L1337 148.5 M1341 140.5 L1345 144.5 L1341 148.5" fill="none" stroke="#345" stroke-width="1.3"/>
<rect x="1353.5" y="136.5" width="16" height="16" fill="#c8dcf0" stroke="#7898b8" stroke-width="1"/><rect x="1357.5" y="144.5" width="9" height="4" fill="none" stroke="#456" stroke-width="1"/>
<rect x="1373.5" y="136.5" width="17" height="16" fill="#c24a4a" stroke="#8a3030" stroke-width="1"/><path d="M1378 140 L1386 149 M1386 140 L1378 149" stroke="#fff" stroke-width="2.4"/>
<rect x="1210.5" y="160.5" width="131" height="67" fill="#fff" stroke="#bdbdbd" stroke-width="1"/>
<circle cx="1276.5" cy="193" r="32" fill="#2a2a2a"/><circle cx="1276.5" cy="193" r="28" fill="none" stroke="#999" stroke-width="1"/><circle cx="1276.5" cy="193" r="26.5" fill="none" stroke="#888" stroke-width="0.7"/><circle cx="1276.5" cy="193" r="20" fill="none" stroke="#aaa" stroke-width="0.8"/><circle cx="1276.5" cy="193" r="24" fill="none" stroke="#666" stroke-width="3" stroke-dasharray="2 1"/>
<g font-family="Liberation Sans" font-weight="bold" font-size="7.5" fill="#eee" text-anchor="middle"><text transform="translate(1276.5 187.5) scale(0.72 1)">Петров</text><text transform="translate(1276.5 195.5) scale(0.72 1)">Петр</text><text transform="translate(1276.5 203.5) scale(0.72 1)">Петрович</text></g>
<rect x="1210.5" y="233.5" width="131" height="20" fill="#ececec" stroke="#c4c4c4" stroke-width="1"/>
<path d="M1329 241 L1333 245 L1337 241" fill="none" stroke="#333" stroke-width="1.6"/>
<rect x="1210.5" y="330.5" width="12" height="12" fill="#fff" stroke="#777" stroke-width="1"/>
<rect x="1210.5" y="353.5" width="12" height="12" fill="#fff" stroke="#777" stroke-width="1"/>
<rect x="1210.5" y="376.5" width="12" height="12" fill="#fff" stroke="#777" stroke-width="1"/>
<rect x="1211.5" y="402.5" width="60" height="20" fill="#ececec" stroke="#d4d4d4" stroke-width="1"/>
<rect x="1281.5" y="402.5" width="20" height="20" fill="#c6dcf2" stroke="#7a9cc0" stroke-width="1"/><rect x="1287" y="411" width="9" height="7" fill="#2d3561"/><path d="M1289 411 V409 Q1291.5 405 1294 409 V411" fill="none" stroke="#2d3561" stroke-width="1.4"/>
<rect x="1367.5" y="156" width="1" height="594" fill="#d8d8d8"/>
<rect x="1368.5" y="163.5" width="19" height="61.0" rx="2" fill="#ececec" stroke="#c8c8c8" stroke-width="1"/>
<rect x="1368.5" y="227.5" width="19" height="103.0" rx="2" fill="#ececec" stroke="#c8c8c8" stroke-width="1"/>
<rect x="1368.5" y="334.5" width="19" height="102.0" rx="2" fill="#ececec" stroke="#c8c8c8" stroke-width="1"/>
<rect x="1368.5" y="440.5" width="19" height="100.0" rx="2" fill="#dbe6f1" stroke="#c8c8c8" stroke-width="1"/>
<rect x="1370.5" y="165.5" width="14" height="13" rx="2" fill="#ddd" stroke="#aaa"/><rect x="1374.5" y="168.5" width="6" height="6" fill="none" stroke="#888"/>
<path d="M1372 231 V245 M1372 236 H1376 M1372 242 H1376" stroke="#555" stroke-width="1" stroke-dasharray="1 1"/><rect x="1375.5" y="233.5" width="5" height="4" fill="#fff" stroke="#333"/><rect x="1381.5" y="231.5" width="4" height="3" fill="#fff" stroke="#333"/><rect x="1381.5" y="238.5" width="4" height="3" fill="#fff" stroke="#333"/>
<path d="M1378 336.5 L1380.2 341.5 L1385.5 342 L1381.5 345.5 L1382.8 350.8 L1378 348 L1373.2 350.8 L1374.5 345.5 L1370.5 342 L1375.8 341.5 Z" fill="#fff" stroke="#444" stroke-width="1"/>
<path d="M1378 443 V452 M1374 447 H1382" stroke="#333" stroke-width="1.2"/><path d="M1374 455 A4 4 0 1 0 1378 451" fill="none" stroke="#333" stroke-width="1.3"/>
<path d="M1368 543 H1386 Q1389 543 1389 546 V612 Q1389 615 1386 615 H1368 Z" fill="#fafafa" stroke="#c8c8c8" stroke-width="1"/>
<circle cx="1381" cy="553" r="6" fill="#f0f0f0" stroke="#444" stroke-width="1.1"/><path d="M1376 554 A5 5 0 0 0 1386 554" fill="#ccc"/>
<path d="M1375.5 599 L1382.5 606 M1382.5 599 L1375.5 606" stroke="#666" stroke-width="1.5"/>
<path d="M1368.5 750 V622 Q1368.5 619.5 1371 619.5 H1389" fill="none" stroke="#d4d4d4" stroke-width="1"/>
<circle cx="1403" cy="152" r="6" fill="#f4f4f4" stroke="#bbb" stroke-width="1"/><path d="M1401 148.5 V155.5 L1406.5 152 Z" fill="#111"/>
<rect x="1397" y="140" width="1.2" height="1.2" fill="#bbb"/>
<rect x="1400" y="140" width="1.2" height="1.2" fill="#bbb"/>
<rect x="1403" y="140" width="1.2" height="1.2" fill="#bbb"/>
<rect x="1406" y="140" width="1.2" height="1.2" fill="#bbb"/>
<path d="M1399.5 172 L1403 168.5 L1406.5 172" fill="none" stroke="#bbb" stroke-width="1.3"/>
<rect x="1394.5" y="178.5" width="17" height="16" fill="#fff" stroke="#222" stroke-width="1.5"/><path d="M1396 180 L1410 193 M1410 180 L1396 193" stroke="#222" stroke-width="1"/>
<rect x="1394" y="195.60" width="18" height="17.1" fill="#1f1f1f"/>
<rect x="1394" y="212.58" width="18" height="17.1" fill="#353535"/>
<rect x="1394" y="229.56" width="18" height="17.1" fill="#474747"/>
<rect x="1394" y="246.54" width="18" height="17.1" fill="#5a5a5a"/>
<rect x="1394" y="263.52" width="18" height="17.1" fill="#6e6e6e"/>
<rect x="1394" y="280.50" width="18" height="17.1" fill="#828282"/>
<rect x="1394" y="297.48" width="18" height="17.1" fill="#969696"/>
<rect x="1394" y="314.46" width="18" height="17.1" fill="#aaaaaa"/>
<rect x="1394" y="331.44" width="18" height="17.1" fill="#bfbfbf"/>
<rect x="1394" y="348.42" width="18" height="17.1" fill="#d5d5d5"/>
<rect x="1394" y="365.40" width="18" height="17.1" fill="#fcfcfc"/>
<rect x="1394" y="382.38" width="18" height="17.1" fill="#2e1a78"/>
<rect x="1394" y="399.36" width="18" height="17.1" fill="#1b87df"/>
<rect x="1394" y="416.34" width="18" height="17.1" fill="#1a9452"/>
<rect x="1394" y="433.32" width="18" height="17.1" fill="#fff000"/>
<rect x="1394" y="450.30" width="18" height="17.1" fill="#e8411d"/>
<rect x="1394" y="467.28" width="18" height="17.1" fill="#e32d78"/>
<rect x="1394" y="484.26" width="18" height="17.1" fill="#9b3c76"/>
<rect x="1394" y="501.24" width="18" height="17.1" fill="#f07c10"/>
<rect x="1394" y="518.22" width="18" height="17.1" fill="#f3938b"/>
<rect x="1394" y="535.20" width="18" height="17.1" fill="#6a625b"/>
<rect x="1394" y="552.18" width="18" height="17.1" fill="#b2a6d2"/>
<rect x="1394" y="569.16" width="18" height="17.1" fill="#8a7fb5"/>
<rect x="1394" y="586.14" width="18" height="17.1" fill="#5b6fae"/>
<rect x="1394" y="603.12" width="18" height="17.1" fill="#6b5b9e"/>
<rect x="1394" y="620.10" width="18" height="17.1" fill="#7b6c90"/>
<rect x="1394" y="637.08" width="18" height="17.1" fill="#4b5183"/>
<rect x="1394" y="654.06" width="18" height="17.1" fill="#4a4a62"/>
<rect x="1394" y="671.04" width="18" height="17.1" fill="#5c6b82"/>
<rect x="1394" y="688.02" width="18" height="17.1" fill="#1a71c2"/>
<path d="M1399.5 711 L1403 714.5 L1406.5 711" fill="none" stroke="#333" stroke-width="1.5"/>
<rect x="1399" y="726" width="1.6" height="10" fill="#111"/><path d="M1407 726 V736 L1401 731Z" fill="#111"/>
<path d="M1193 761 L1198 756 L1203 761 L1198 766 Z" fill="#fff" stroke="#444" stroke-width="1.1"/><path d="M1193.5 762 H1202.5 L1198 766Z" fill="#d8901c"/><path d="M1198 756 Q1196 753 1199 752" fill="none" stroke="#444"/>
<rect x="1211.5" y="752.5" width="16" height="17" fill="#1a1a1a" stroke="#888" stroke-width="1"/>
<path d="M1198 774 L1202 782 L1198 786 L1194 782 Z" fill="#fff" stroke="#333" stroke-width="1.1"/><rect x="1193" y="787" width="10" height="1.5" fill="#333"/>
<rect x="1211.5" y="772.5" width="16" height="17" fill="#1a1a1a" stroke="#888" stroke-width="1"/>
<rect x="1409" y="779" width="1.3" height="1.3" fill="#bbb"/>
<rect x="1405" y="783" width="1.3" height="1.3" fill="#bbb"/>
<rect x="1409" y="783" width="1.3" height="1.3" fill="#bbb"/>
<rect x="1401" y="787" width="1.3" height="1.3" fill="#bbb"/>
<rect x="1405" y="787" width="1.3" height="1.3" fill="#bbb"/>
<rect x="1409" y="787" width="1.3" height="1.3" fill="#bbb"/>
</svg>
<div class="a t" style="left:575.26px;top:18.30px;font-size:15px;line-height:15px;color:#2a2a2a;transform:scaleX(0.9721);transform-origin:0 0;">CorelDRAW X4 (Not for resale) - [Graphic1]</div>
<div class="a t" style="left:56.01px;top:47.00px;font-size:13px;line-height:13px;color:#e6e6e6;transform:scaleX(0.9325);transform-origin:0 0;">File</div>
<div class="a t" style="left:94.00px;top:47.00px;font-size:13px;line-height:13px;color:#e6e6e6;transform:scaleX(0.9417);transform-origin:0 0;">Edit</div>
<div class="a t" style="left:134.95px;top:47.00px;font-size:13px;line-height:13px;color:#e6e6e6;transform:scaleX(0.8880);transform-origin:0 0;">View</div>
<div class="a t" style="left:178.99px;top:47.00px;font-size:13px;line-height:13px;color:#e6e6e6;transform:scaleX(0.9506);transform-origin:0 0;">Layout</div>
<div class="a t" style="left:235.98px;top:47.00px;font-size:13px;line-height:13px;color:#e6e6e6;transform:scaleX(0.9201);transform-origin:0 0;">Arrange</div>
<div class="a t" style="left:297.02px;top:47.00px;font-size:13px;line-height:13px;color:#e6e6e6;transform:scaleX(0.9162);transform-origin:0 0;">Effects</div>
<div class="a t" style="left:351.99px;top:47.00px;font-size:13px;line-height:13px;color:#e6e6e6;transform:scaleX(0.9466);transform-origin:0 0;">Bitmaps</div>
<div class="a t" style="left:415.75px;top:47.00px;font-size:13px;line-height:13px;color:#e6e6e6;transform:scaleX(0.8435);transform-origin:0 0;">Text</div>
<div class="a t" style="left:457.72px;top:47.00px;font-size:13px;line-height:13px;color:#e6e6e6;transform:scaleX(0.9479);transform-origin:0 0;">Table</div>
<div class="a t" style="left:506.73px;top:47.00px;font-size:13px;line-height:13px;color:#e6e6e6;transform:scaleX(0.9347);transform-origin:0 0;">Tools</div>
<div class="a t" style="left:555.95px;top:47.00px;font-size:13px;line-height:13px;color:#e6e6e6;transform:scaleX(0.9522);transform-origin:0 0;">Window</div>
<div class="a t" style="left:618.94px;top:47.00px;font-size:13px;line-height:13px;color:#e6e6e6;">Help</div>
<div class="a t" style="left:468.51px;top:75.00px;font-size:13px;line-height:13px;color:#111;transform:scaleX(0.8690);transform-origin:0 0;">817%</div>
<div class="a t" style="left:566.51px;top:75.00px;font-size:13px;line-height:13px;color:#111;transform:scaleX(0.8242);transform-origin:0 0;">Snap to</div>
<div class="a t" style="left:35.83px;top:101.30px;font-size:13px;line-height:13px;color:#222;transform:scaleX(1.1391);transform-origin:0 0;">x:</div>
<div class="a t" style="left:36.97px;top:117.80px;font-size:13px;line-height:13px;color:#222;transform:scaleX(1.0120);transform-origin:0 0;">y:</div>
<div class="a t" style="left:51.45px;top:102.22px;font-size:12.5px;line-height:12.5px;color:#111;transform:scaleX(0.8515);transform-origin:0 0;">78,809 mm</div>
<div class="a t" style="left:51.46px;top:118.22px;font-size:12.5px;line-height:12.5px;color:#111;transform:scaleX(0.8514);transform-origin:0 0;">223,84 mm</div>
<div class="a t" style="left:147.76px;top:102.22px;font-size:12.5px;line-height:12.5px;color:#111;transform:scaleX(0.8466);transform-origin:0 0;">42,752 mm</div>
<div class="a t" style="left:147.76px;top:118.22px;font-size:12.5px;line-height:12.5px;color:#111;transform:scaleX(0.8466);transform-origin:0 0;">42,752 mm</div>
<div class="a t" style="left:239.17px;top:102.22px;font-size:12.5px;line-height:12.5px;color:#111;transform:scaleX(0.8678);transform-origin:0 0;">108,4</div>
<div class="a t" style="left:239.17px;top:118.22px;font-size:12.5px;line-height:12.5px;color:#111;transform:scaleX(0.8678);transform-origin:0 0;">108,4</div>
<div class="a t" style="left:283.61px;top:102.30px;font-size:13px;line-height:13px;color:#333;transform:scaleX(0.8465);transform-origin:0 0;">%</div>
<div class="a t" style="left:283.61px;top:118.30px;font-size:13px;line-height:13px;color:#333;transform:scaleX(0.8465);transform-origin:0 0;">%</div>
<div class="a t" style="left:360.52px;top:110.22px;font-size:12.5px;line-height:12.5px;color:#111;transform:scaleX(0.9756);transform-origin:0 0;">0,0</div>
<div class="a t" style="left:604.40px;top:102.22px;font-size:12.5px;line-height:12.5px;color:#111;transform:scaleX(1.0321);transform-origin:0 0;">90,0</div>
<div class="a t" style="left:604.40px;top:118.22px;font-size:12.5px;line-height:12.5px;color:#111;transform:scaleX(1.0321);transform-origin:0 0;">90,0</div>
<div class="a t" style="left:795.56px;top:110.72px;font-size:12.5px;line-height:12.5px;color:#111;transform:scaleX(0.8919);transform-origin:0 0;">0,5 mm</div>
<div class="a t" style="left:122.2px;top:137.5px;font-size:10.5px;line-height:11px;color:#111;-webkit-text-stroke:0.25px #111">40</div>
<div class="a t" style="left:185.5px;top:137.5px;font-size:10.5px;line-height:11px;color:#111;-webkit-text-stroke:0.25px #111">45</div>
<div class="a t" style="left:248.9px;top:137.5px;font-size:10.5px;line-height:11px;color:#111;-webkit-text-stroke:0.25px #111">50</div>
<div class="a t" style="left:312.2px;top:137.5px;font-size:10.5px;line-height:11px;color:#111;-webkit-text-stroke:0.25px #111">55</div>
<div class="a t" style="left:375.6px;top:137.5px;font-size:10.5px;line-height:11px;color:#111;-webkit-text-stroke:0.25px #111">60</div>
<div class="a t" style="left:438.9px;top:137.5px;font-size:10.5px;line-height:11px;color:#111;-webkit-text-stroke:0.25px #111">65</div>
<div class="a t" style="left:502.3px;top:137.5px;font-size:10.5px;line-height:11px;color:#111;-webkit-text-stroke:0.25px #111">70</div>
<div class="a t" style="left:565.6px;top:137.5px;font-size:10.5px;line-height:11px;color:#111;-webkit-text-stroke:0.25px #111">75</div>
<div class="a t" style="left:629.0px;top:137.5px;font-size:10.5px;line-height:11px;color:#111;-webkit-text-stroke:0.25px #111">80</div>
<div class="a t" style="left:692.3px;top:137.5px;font-size:10.5px;line-height:11px;color:#111;-webkit-text-stroke:0.25px #111">85</div>
<div class="a t" style="left:755.7px;top:137.5px;font-size:10.5px;line-height:11px;color:#111;-webkit-text-stroke:0.25px #111">90</div>
<div class="a t" style="left:819.0px;top:137.5px;font-size:10.5px;line-height:11px;color:#111;-webkit-text-stroke:0.25px #111">95</div>
<div class="a t" style="left:879.4px;top:137.5px;font-size:10.5px;line-height:11px;color:#111;-webkit-text-stroke:0.25px #111">100</div>
<div class="a t" style="left:942.8px;top:137.5px;font-size:10.5px;line-height:11px;color:#111;-webkit-text-stroke:0.25px #111">105</div>
<div class="a t" style="left:1006.1px;top:137.5px;font-size:10.5px;line-height:11px;color:#111;-webkit-text-stroke:0.25px #111">110</div>
<div class="a t" style="left:1069.5px;top:137.5px;font-size:10.5px;line-height:11px;color:#111;-webkit-text-stroke:0.25px #111">115</div>
<div class="a t" style="left:1133.36px;top:137.11px;font-size:10.5px;line-height:10.5px;color:#222;transform:scaleX(0.9167);transform-origin:0 0;">millimeters</div>
<div class="a t" style="left:50.7px;top:169.5px;width:21.5px;font-size:10.5px;line-height:11px;color:#111;-webkit-text-stroke:0.25px #111;text-align:center;transform:rotate(-90deg)">245</div>
<div class="a t" style="left:50.7px;top:232.8px;width:21.5px;font-size:10.5px;line-height:11px;color:#111;-webkit-text-stroke:0.25px #111;text-align:center;transform:rotate(-90deg)">240</div>
<div class="a t" style="left:50.7px;top:296.2px;width:21.5px;font-size:10.5px;line-height:11px;color:#111;-webkit-text-stroke:0.25px #111;text-align:center;transform:rotate(-90deg)">235</div>
<div class="a t" style="left:50.7px;top:359.6px;width:21.5px;font-size:10.5px;line-height:11px;color:#111;-webkit-text-stroke:0.25px #111;text-align:center;transform:rotate(-90deg)">230</div>
<div class="a t" style="left:50.7px;top:422.9px;width:21.5px;font-size:10.5px;line-height:11px;color:#111;-webkit-text-stroke:0.25px #111;text-align:center;transform:rotate(-90deg)">225</div>
<div class="a t" style="left:50.7px;top:486.2px;width:21.5px;font-size:10.5px;line-height:11px;color:#111;-webkit-text-stroke:0.25px #111;text-align:center;transform:rotate(-90deg)">220</div>
<div class="a t" style="left:50.7px;top:549.6px;width:21.5px;font-size:10.5px;line-height:11px;color:#111;-webkit-text-stroke:0.25px #111;text-align:center;transform:rotate(-90deg)">215</div>
<div class="a t" style="left:50.7px;top:613.0px;width:21.5px;font-size:10.5px;line-height:11px;color:#111;-webkit-text-stroke:0.25px #111;text-align:center;transform:rotate(-90deg)">210</div>
<div class="a t" style="left:50.7px;top:676.3px;width:21.5px;font-size:10.5px;line-height:11px;color:#111;-webkit-text-stroke:0.25px #111;text-align:center;transform:rotate(-90deg)">205</div>
<div class="a t" style="left:31.5px;top:715.5px;width:60px;font-size:10px;line-height:11px;color:#222;text-align:center;transform:rotate(-90deg)">millimeters</div>
<div class="a t" style="left:138.96px;top:733.00px;font-size:13px;line-height:13px;color:#111;transform:scaleX(1.0518);transform-origin:0 0;">1 of 1</div>
<div class="a t" style="left:256.97px;top:733.00px;font-size:13px;line-height:13px;color:#111;transform:scaleX(0.9620);transform-origin:0 0;">Page 1</div>
<div class="a t" style="left:1191.08px;top:138.00px;font-size:13px;line-height:13px;color:#222;transform:scaleX(0.8629);transform-origin:0 0;">Lens</div>
<div class="a t" style="left:1214.89px;top:237.42px;font-size:12.5px;line-height:12.5px;color:#111;transform:scaleX(0.9661);transform-origin:0 0;">Invert</div>
<div class="a t" style="left:1225.09px;top:330.84px;font-size:12px;line-height:12px;color:#111;transform:scaleX(0.9274);transform-origin:0 0;">Frozen</div>
<div class="a t" style="left:1225.95px;top:353.84px;font-size:12px;line-height:12px;color:#111;transform:scaleX(0.8865);transform-origin:0 0;">Viewpoint</div>
<div class="a t" style="left:1225.14px;top:376.84px;font-size:12px;line-height:12px;color:#111;transform:scaleX(0.8746);transform-origin:0 0;">Remove Face</div>
<div class="a t" style="left:1227.98px;top:406.84px;font-size:12px;line-height:12px;color:#a8a8a8;transform:scaleX(0.8675);transform-origin:0 0;">Apply</div>
<div class="a t" style="left:1384.0px;top:180.0px;font-size:11px;line-height:12px;color:#555;transform:rotate(90deg);transform-origin:0 0;white-space:nowrap">Contour</div>
<div class="a t" style="left:1384.0px;top:248.0px;font-size:11px;line-height:12px;color:#555;transform:rotate(90deg);transform-origin:0 0;white-space:nowrap">Object Manager</div>
<div class="a t" style="left:1384.0px;top:357.0px;font-size:11px;line-height:12px;color:#555;transform:rotate(90deg);transform-origin:0 0;white-space:nowrap">Insert Character</div>
<div class="a t" style="left:1384.0px;top:462.0px;font-size:11px;line-height:12px;color:#555;transform:rotate(90deg);transform-origin:0 0;white-space:nowrap">Transformation</div>
<div class="a t" style="left:1386px;top:564px;font-size:12px;line-height:12px;color:#222;transform:rotate(90deg);transform-origin:0 0;white-space:nowrap">Lens</div>
<div class="a t" style="left:25.95px;top:755.92px;font-size:12.5px;line-height:12.5px;color:#222;transform:scaleX(0.8817);transform-origin:0 0;white-space:pre">Width: 42,752  Height: 42,752  Center: (78,809; 223,840)  millimeters</div>
<div class="a t" style="left:424.63px;top:755.92px;font-size:12.5px;line-height:12.5px;color:#222;transform:scaleX(0.8468);transform-origin:0 0;white-space:pre">Ellipse on Layer 1  (Lens)</div>
<div class="a t" style="left:25.31px;top:775.92px;font-size:12.5px;line-height:12.5px;color:#222;transform:scaleX(0.8935);transform-origin:0 0;white-space:pre">( 74,230; 231,397 )</div>
<div class="a t" style="left:140.45px;top:775.92px;font-size:12.5px;line-height:12.5px;color:#222;transform:scaleX(0.8661);transform-origin:0 0;white-space:pre">Click an object twice for rotating/skewing; dbl-clicking tool selects all objects; Shift+click multi-selects; Alt+click digs; Ctrl+click selects in a group</div>
<div class="a t" style="left:1231.10px;top:755.92px;font-size:12.5px;line-height:12.5px;color:#222;transform:scaleX(0.8778);transform-origin:0 0;">R:0 G:0 B:0</div>
<div class="a t" style="left:1231.14px;top:775.92px;font-size:12.5px;line-height:12.5px;color:#222;transform:scaleX(0.8428);transform-origin:0 0;white-space:pre">Black  0,500 millimeters</div>
</body></html>
